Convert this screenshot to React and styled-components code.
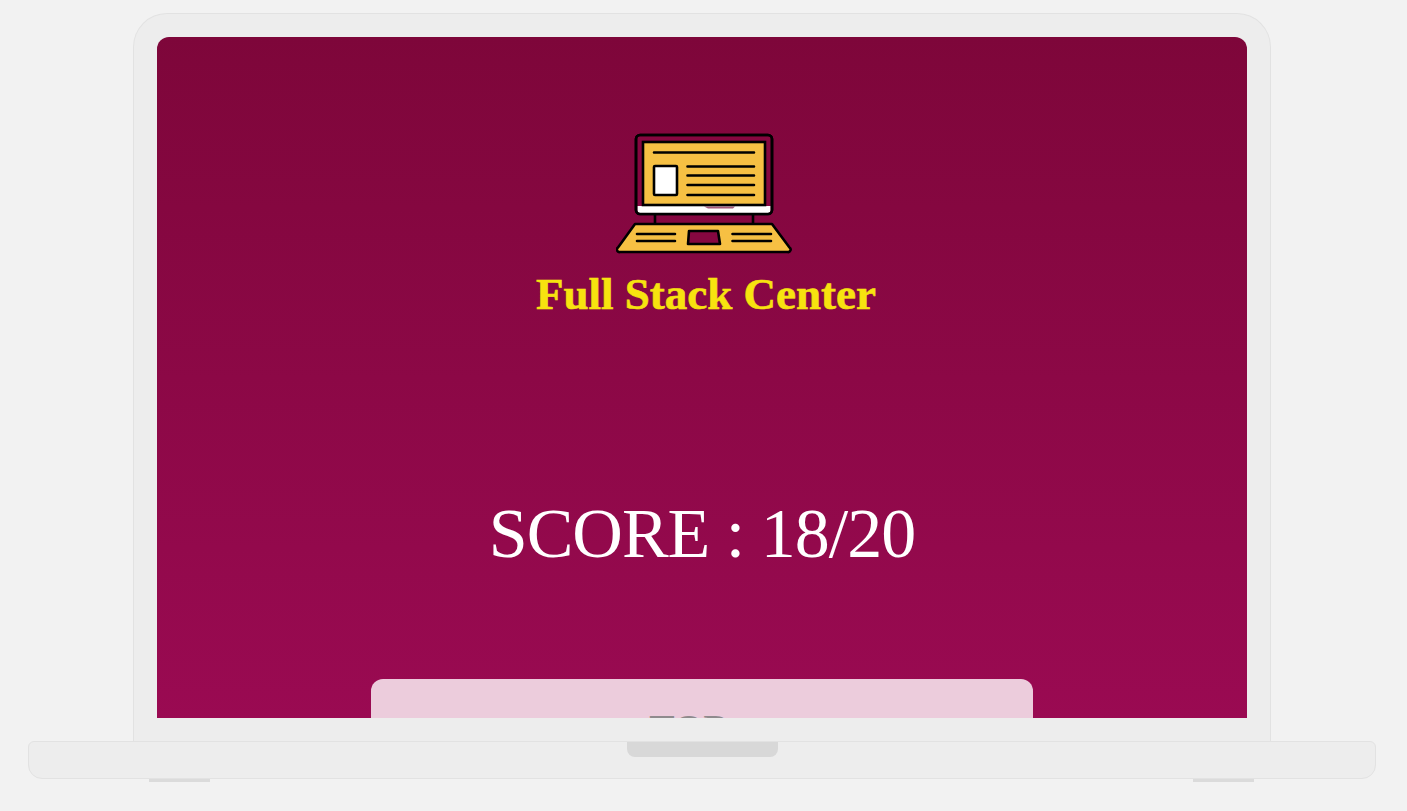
import React from 'react'
import styled, { createGlobalStyle } from 'styled-components'

const Global = createGlobalStyle`
  html, body {
    margin: 0;
    padding: 0;
    height: 100%;
    background: #f2f2f2;
    overflow: hidden;
  }
`

const Page = styled.div`
  width: 1407px;
  height: 811px;
  padding-top: 13px;
  box-sizing: border-box;
  display: flex;
  flex-direction: column;
  align-items: center;
  font-family: "Liberation Serif", serif;
`

const Lid = styled.div`
  width: 1138px;
  height: 729px;
  box-sizing: border-box;
  padding: 23px 23px 23px;
  background: #ededed;
  border: 1px solid #e2e2e2;
  border-bottom: none;
  border-radius: 34px 34px 0 0;
  margin-left: -3px;
`

const Screen = styled.div`
  height: 681px;
  border-radius: 12px 12px 0 0;
  overflow: hidden;
  background: linear-gradient(to bottom, #7e063a, #9a0a52);
  display: flex;
  flex-direction: column;
  align-items: center;
  padding-top: 96px;
  box-sizing: border-box;
`

const Logo = styled.svg`
  display: block;
  width: 176px;
  height: 121px;
  margin-left: 4px;
  flex-shrink: 0;
`

const Title = styled.h1`
  margin: 13px 0 0 8px;
  font-size: 45px;
  line-height: 54px;
  font-weight: 700;
  color: #f7e30f;
  -webkit-text-stroke: 0.6px #f7e30f;
  white-space: nowrap;
`

const Score = styled.div`
  margin-top: 169px;
  font-size: 70px;
  letter-spacing: -1px;
  line-height: 88px;
  font-weight: 400;
  color: #ffffff;
  white-space: nowrap;
`

const Card = styled.div`
  margin-top: 101px;
  width: 662px;
  flex-shrink: 0;
  height: 200px;
  padding-top: 26px;
  padding-right: 28px;
  box-sizing: border-box;
  background: #ecccdc;
  border-radius: 12px;
  text-align: center;
  color: #8f8a8d;
  font-size: 38px;
  line-height: 46px;
  font-weight: 700;
`

const Base = styled.div`
  width: 1348px;
  height: 38px;
  box-sizing: border-box;
  margin-top: -1px;
  margin-left: -3px;
  background: #ededed;
  border: 1px solid #e2e2e2;
  border-radius: 6px 6px 14px 14px;
  display: flex;
  justify-content: center;
`

const Notch = styled.div`
  width: 151px;
  height: 15px;
  margin-left: 1px;
  background: #d8d8d8;
  border-radius: 0 0 8px 8px;
`

const Feet = styled.div`
  width: 1105px;
  margin-left: -4px;
  display: flex;
  justify-content: space-between;
`

const Foot = styled.div`
  width: 61px;
  height: 3px;
  background: #dbdbdb;
`

const LaptopIcon = () => (
  <Logo viewBox="16 13 176 121" fill="none" stroke="#000" strokeWidth="2.6" strokeLinecap="round" strokeLinejoin="round">
    <rect x="36" y="15" width="136" height="79" rx="4" fill="#860740" />
    <path d="M37.500 86H170.500V90a3 3 0 0 1-3 3H40.500a3 3 0 0 1-3-3Z" fill="#fff" stroke="none" />
    <path d="M104 86.500H135L133 88.500H108Z" fill="#a55a7c" stroke="none" />
    <rect x="36" y="15" width="136" height="79" rx="4" />
    <rect x="43" y="22" width="122" height="63" fill="#f6c043" strokeLinejoin="miter" />
    <path d="M54 32.500H154M87.500 46.500H154M87.500 55.500H154M87.500 65H154M87.500 75H154" />
    <rect x="54" y="46" width="23" height="29" rx="1" fill="#fff" />
    <path d="M55 95V104M153 95V104" />
    <path d="M35 104H172L189.500 127.500a2.500 2.500 0 0 1-2 4.500H20a2.500 2.500 0 0 1-2-4.500Z" fill="#f6c043" />
    <path d="M37 114H75M37 121H75M132.500 114H171M132.500 121H171" />
    <path d="M89 111H118L120 124H88Z" fill="#860740" />
  </Logo>
)

export default function App() {
  return (
    <Page>
      <Global />
      <Lid>
        <Screen>
          <LaptopIcon />
          <Title>Full Stack Center</Title>
          <Score>SCORE : 18/20</Score>
          <Card>TOP</Card>
        </Screen>
      </Lid>
      <Base>
        <Notch />
      </Base>
      <Feet>
        <Foot />
        <Foot />
      </Feet>
    </Page>
  )
}
